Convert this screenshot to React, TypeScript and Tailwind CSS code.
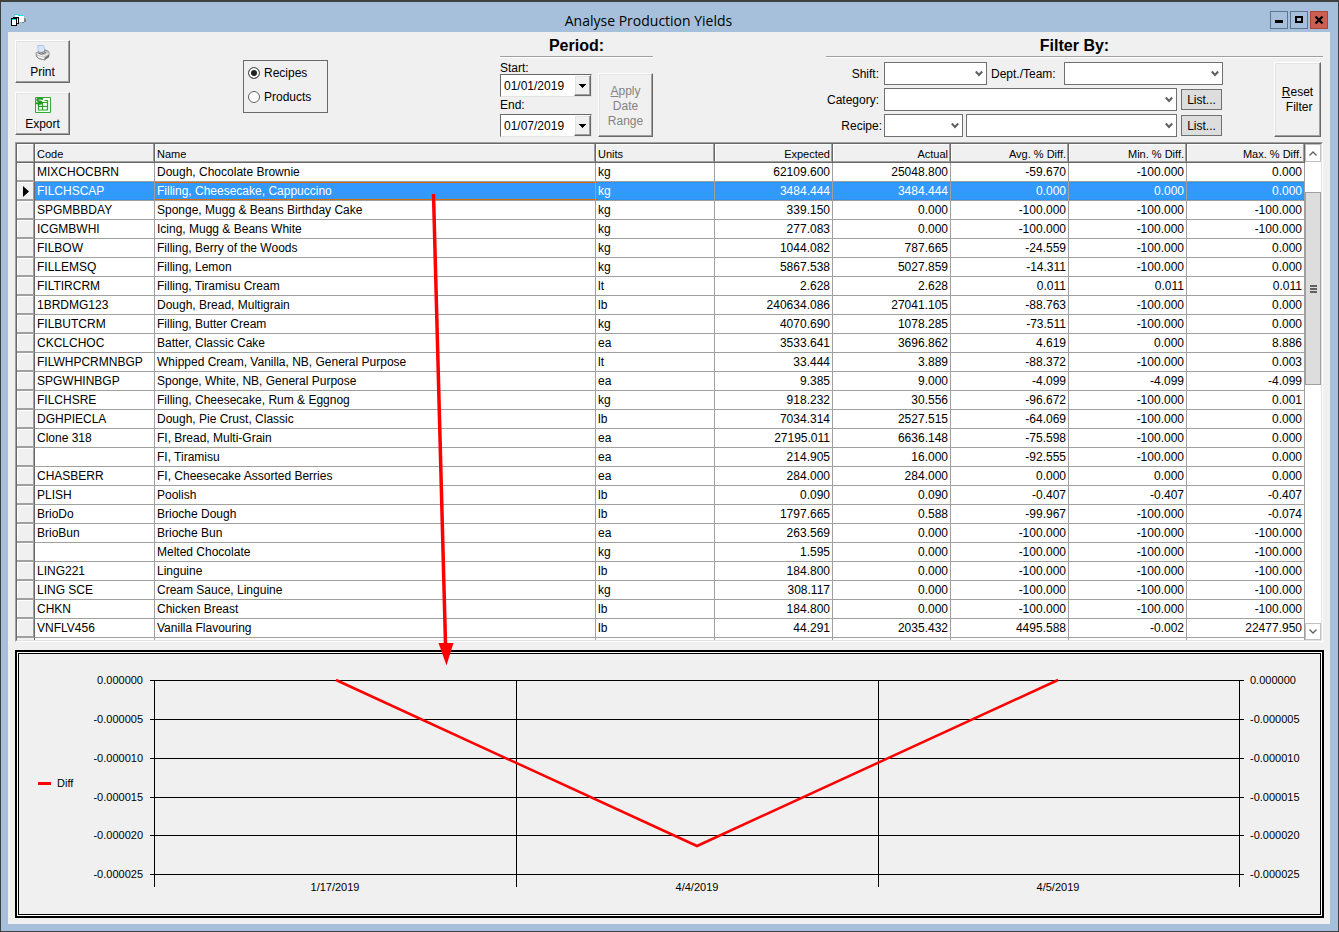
import React from "react";

type Row = [string, string, string, string, string, string, string, string];

const rows: Row[] = [
  ["MIXCHOCBRN", "Dough, Chocolate Brownie", "kg", "62109.600", "25048.800", "-59.670", "-100.000", "0.000"],
  ["FILCHSCAP", "Filling, Cheesecake, Cappuccino", "kg", "3484.444", "3484.444", "0.000", "0.000", "0.000"],
  ["SPGMBBDAY", "Sponge, Mugg & Beans Birthday Cake", "kg", "339.150", "0.000", "-100.000", "-100.000", "-100.000"],
  ["ICGMBWHI", "Icing, Mugg & Beans White", "kg", "277.083", "0.000", "-100.000", "-100.000", "-100.000"],
  ["FILBOW", "Filling, Berry of the Woods", "kg", "1044.082", "787.665", "-24.559", "-100.000", "0.000"],
  ["FILLEMSQ", "Filling, Lemon", "kg", "5867.538", "5027.859", "-14.311", "-100.000", "0.000"],
  ["FILTIRCRM", "Filling, Tiramisu Cream", "lt", "2.628", "2.628", "0.011", "0.011", "0.011"],
  ["1BRDMG123", "Dough, Bread, Multigrain", "lb", "240634.086", "27041.105", "-88.763", "-100.000", "0.000"],
  ["FILBUTCRM", "Filling, Butter Cream", "kg", "4070.690", "1078.285", "-73.511", "-100.000", "0.000"],
  ["CKCLCHOC", "Batter, Classic Cake", "ea", "3533.641", "3696.862", "4.619", "0.000", "8.886"],
  ["FILWHPCRMNBGP", "Whipped Cream, Vanilla, NB, General Purpose", "lt", "33.444", "3.889", "-88.372", "-100.000", "0.003"],
  ["SPGWHINBGP", "Sponge, White, NB, General Purpose", "ea", "9.385", "9.000", "-4.099", "-4.099", "-4.099"],
  ["FILCHSRE", "Filling, Cheesecake, Rum & Eggnog", "kg", "918.232", "30.556", "-96.672", "-100.000", "0.001"],
  ["DGHPIECLA", "Dough, Pie Crust, Classic", "lb", "7034.314", "2527.515", "-64.069", "-100.000", "0.000"],
  ["Clone 318", "FI, Bread, Multi-Grain", "ea", "27195.011", "6636.148", "-75.598", "-100.000", "0.000"],
  ["", "FI, Tiramisu", "ea", "214.905", "16.000", "-92.555", "-100.000", "0.000"],
  ["CHASBERR", "FI, Cheesecake Assorted Berries", "ea", "284.000", "284.000", "0.000", "0.000", "0.000"],
  ["PLISH", "Poolish", "lb", "0.090", "0.090", "-0.407", "-0.407", "-0.407"],
  ["BrioDo", "Brioche Dough", "lb", "1797.665", "0.588", "-99.967", "-100.000", "-0.074"],
  ["BrioBun", "Brioche Bun", "ea", "263.569", "0.000", "-100.000", "-100.000", "-100.000"],
  ["", "Melted Chocolate", "kg", "1.595", "0.000", "-100.000", "-100.000", "-100.000"],
  ["LING221", "Linguine", "lb", "184.800", "0.000", "-100.000", "-100.000", "-100.000"],
  ["LING SCE", "Cream Sauce, Linguine", "kg", "308.117", "0.000", "-100.000", "-100.000", "-100.000"],
  ["CHKN", "Chicken Breast", "lb", "184.800", "0.000", "-100.000", "-100.000", "-100.000"],
  ["VNFLV456", "Vanilla Flavouring", "lb", "44.291", "2035.432", "4495.588", "-0.002", "22477.950"],
];

const headers = ["Code", "Name", "Units", "Expected", "Actual", "Avg. % Diff.", "Min. % Diff.", "Max. % Diff."];
const SELECTED = 1;

const raised =
  "border border-t-white border-l-white border-r-[#696969] border-b-[#696969] bg-[#f0f0f0] shadow-[inset_-1px_-1px_0_#a0a0a0,inset_1px_1px_0_#e3e3e3]";

function AppIcon() {
  return (
    <svg width="16" height="14" viewBox="0 0 16 14" shapeRendering="crispEdges" aria-hidden="true">
      <path d="M4 2h8v1h1v6H8V4H4z" fill="#fff" />
      <path d="M3 1h4v1H3zM7 2h5v1H7z" fill="#00e5e5" />
      <path d="M13 5h1v1h1v3h-2zM11 9h2v1h-2z" fill="#808080" />
      <path d="M2 4h6v7H2z" fill="#000" />
      <path d="M3 6h4v4H3z" fill="#fff" />
      <path d="M3 5h4v1H3z" fill="#00e5e5" />
      <path d="M0 5h6v8H0z" fill="#000" />
      <path d="M1 7h4v5H1z" fill="#fff" />
      <path d="M1 6h4v1H1z" fill="#00e5e5" />
    </svg>
  );
}

function PrinterIcon() {
  return (
    <svg width="16" height="16" viewBox="0 0 16 16" aria-hidden="true">
      <path d="M2.500 .5h6l2 6-5 2.500-1.500-1z" fill="#d6e6ff" stroke="#9db4dc" strokeWidth=".7" />
      <path d="M1 8.500c0-1 1.500-1.500 3-1.700l1 1 5-1.300-.5-1.500c2 0 4.500 1 4.500 2.500v4L9.500 15 4 13.800 1.500 11.500z" fill="#c4c4c4" stroke="#7c7c7c" strokeWidth=".8" />
      <path d="M2 9l6 2 5.500-2.500" fill="none" stroke="#f4f4f4" />
      <path d="M3.500 8.200l3 1 4.500-1.700" fill="none" stroke="#666" strokeWidth=".9" />
      <path d="M3 11.500l5.500 1.800 4-2" fill="none" stroke="#fff" strokeWidth="1.200" />
      <path d="M9.500 12.500v2.500l4.500-3V9.800z" fill="#707070" />
    </svg>
  );
}

function SheetIcon() {
  return (
    <svg width="16" height="16" viewBox="0 0 16 16" aria-hidden="true">
      <path d="M.5 .5h15v15H.5z" fill="#f3fbf1" stroke="#3aa835" />
      <path d="M3.500 5.500h9v7.500h-9zM3.500 9.500h9M7.500 5.500V13M9.500 3.500h3v2" fill="none" stroke="#2fa52a" strokeWidth="1.200" />
      <path d="M8 2C5 .8 2 1.500 2.300 3.200S7 4 6.500 5.700 3 7 1 5.800" fill="none" stroke="#1f9a1a" strokeWidth="2" />
    </svg>
  );
}

function Combo({ id, className, label }: { id: string; className: string; label?: string }) {
  return (
    <div className={`relative h-[23px] ${className}`}>
      <select id={id} aria-label={label} className="h-full w-full appearance-none border border-[#707070] bg-white px-1">
        <option value=""></option>
      </select>
      <svg className="pointer-events-none absolute top-2 right-1" width="8" height="7" viewBox="0 0 8 7" aria-hidden="true">
        <path d="M.8 1.500l3.200 3.500L7.200 1.500" fill="none" stroke="#606060" strokeWidth="2" />
      </svg>
    </div>
  );
}

function DateBox({ id, value }: { id: string; value: string }) {
  return (
    <div className="flex h-[23px] w-[92px] border border-t-[#696969] border-r-[#e3e3e3] border-b-[#e3e3e3] border-l-[#696969] bg-white">
      <input id={id} defaultValue={value} className="w-0 flex-1 bg-white pl-[3px] outline-none" />
      <button type="button" aria-label="Open calendar" className={`flex w-[17px] items-center justify-center ${raised}`}>
        <svg width="7" height="4" viewBox="0 0 7 4" shapeRendering="crispEdges" aria-hidden="true">
          <path d="M0 0h7L3.500 4z" fill="#000" />
        </svg>
      </button>
    </div>
  );
}

function ListButton() {
  return (
    <button type="button" className="ml-1 h-[21px] w-[41px] border border-[#707070] bg-[#dddddd]">
      List...
    </button>
  );
}

function Heading({ children }: { children: React.ReactNode }) {
  return (
    <h2 className="h-[21px] border-b border-[#a0a0a0] text-center text-base leading-5 font-bold shadow-[0_1px_0_#fff]">
      {children}
    </h2>
  );
}

function Toolbar() {
  return (
    <div className="flex h-[110px] items-start pr-[7px] pl-[7px]">
      <div className="flex flex-col gap-[9px] pt-2">
        <button type="button" className={`flex h-[43px] w-[55px] flex-col items-center justify-end gap-1 pb-[3px] leading-[14px] ${raised}`}>
          <PrinterIcon />
          Print
        </button>
        <button type="button" className={`flex h-[43px] w-[55px] flex-col items-center justify-end gap-1 pb-[3px] leading-[14px] ${raised}`}>
          <SheetIcon />
          Export
        </button>
      </div>

      <fieldset className="mt-7 ml-[173px] flex h-[53px] w-[85px] flex-col gap-[8px] border border-[#696969] pt-[4px] pl-1">
        {["Recipes", "Products"].map((name, i) => (
          <label key={name} className="flex h-4 items-center gap-1 leading-[18px]">
            <input
              type="radio"
              name="kind"
              defaultChecked={i === 0}
              className="h-3 w-3 appearance-none rounded-full border border-[#606060] bg-white checked:bg-[#222] checked:shadow-[inset_0_0_0_2px_#fff]"
            />
            {name}
          </label>
        ))}
      </fieldset>

      <section className="mt-1 ml-[172px] w-[153px]">
        <Heading>Period:</Heading>
        <div className="flex items-end justify-between pt-[3px]">
          <div className="flex flex-col">
            <label htmlFor="start" className="h-[14px] leading-4">Start:</label>
            <DateBox id="start" value="01/01/2019" />
            <label htmlFor="end" className="h-[17px] leading-[17px]">End:</label>
            <DateBox id="end" value="01/07/2019" />
          </div>
          <button type="button" disabled className={`h-[64px] w-[55px] pt-[2px] leading-[15px] text-[#838383] ${raised}`}>
            <u>A</u>pply
            <br />
            Date
            <br />
            Range
          </button>
        </div>
      </section>

      <section className="mt-1 ml-auto w-[497px]">
        <Heading>Filter By:</Heading>
        <div className="flex justify-between pt-[5px] pr-[2px]">
          <div className="flex flex-col gap-[3px]">
            <div className="flex items-center">
              <label htmlFor="shift" className="w-[58px] pr-[5px] text-right">Shift:</label>
              <Combo id="shift" className="w-[103px]" />
              <label htmlFor="team" className="w-[77px] pl-1">Dept./Team:</label>
              <Combo id="team" className="w-[159px]" />
            </div>
            <div className="flex items-center">
              <label htmlFor="category" className="w-[58px] pr-[5px] text-right">Category:</label>
              <Combo id="category" className="w-[293px]" />
              <ListButton />
            </div>
            <div className="flex items-center">
              <label htmlFor="recipe" className="w-[58px] pr-[2px] text-right">Recipe:</label>
              <Combo id="recipe" className="w-[79px]" />
              <Combo id="recipe-name" label="Recipe name" className="ml-[3px] w-[211px]" />
              <ListButton />
            </div>
          </div>
          <button type="button" className={`h-[75px] w-[47px] leading-[15px] ${raised}`}>
            <u>R</u>eset
            <br />
            &nbsp;Filter
          </button>
        </div>
      </section>
    </div>
  );
}

function ScrollBar() {
  return (
    <div className="flex w-4 flex-col bg-white text-[#606060]">
      <button type="button" aria-label="Scroll up" className="flex h-[18px] items-center justify-center border border-[#c0c0c0] bg-white">
        <svg width="8" height="5" viewBox="0 0 8 5" aria-hidden="true">
          <path d="M.5 4.500L4 1l3.500 3.500" fill="none" stroke="currentColor" strokeWidth="1.300" />
        </svg>
      </button>
      <div className="h-[30px]" />
      <div className="flex h-[193px] flex-col items-center justify-center gap-px border border-[#a0a0a0] bg-[#dddddd]">
        <span className="h-[2px] w-[7px] bg-[#606060]" />
        <span className="h-[2px] w-[7px] bg-[#606060]" />
        <span className="h-[2px] w-[7px] bg-[#606060]" />
      </div>
      <div className="flex-1" />
      <button type="button" aria-label="Scroll down" className="flex h-[17px] items-center justify-center border border-[#c0c0c0] bg-white">
        <svg width="8" height="5" viewBox="0 0 8 5" aria-hidden="true">
          <path d="M.5 .5L4 4 7.500 .5" fill="none" stroke="currentColor" strokeWidth="1.300" />
        </svg>
      </button>
    </div>
  );
}

const headCell =
  "h-[19px] overflow-hidden border-r border-b border-[#696969] p-0 px-[2px] pt-px align-middle text-[11px] leading-[14px] font-normal whitespace-nowrap shadow-[inset_-1px_-1px_0_#a0a0a0,inset_1px_1px_0_#fff]";
const rowMarker =
  "border-r border-b border-r-[#696969] border-b-[#a0a0a0] bg-[#f0f0f0] p-0 shadow-[inset_-1px_-1px_0_#a0a0a0,inset_1px_1px_0_#fff]";

function Grid() {
  return (
    <div className="mx-[7px] flex border border-t-[#a0a0a0] border-r-white border-b-white border-l-[#a0a0a0]">
      <div className="flex min-w-0 flex-1 border border-t-[#696969] border-r-[#e3e3e3] border-b-[#e3e3e3] border-l-[#696969]">
        <table className="w-0 flex-1 table-fixed border-separate border-spacing-0 bg-white">
          <colgroup>
            <col className="w-[18px]" />
            <col className="w-[120px]" />
            <col />
            <col className="w-[119px]" />
            <col className="w-[118px]" />
            <col className="w-[118px]" />
            <col className="w-[118px]" />
            <col className="w-[118px]" />
            <col className="w-[118px]" />
          </colgroup>
          <thead className="bg-[#f0f0f0]">
            <tr>
              <th className={headCell} aria-label="Row" />
              {headers.map((h, i) => (
                <th key={h} scope="col" className={`${headCell} ${i > 2 ? "text-right" : "text-left"}`}>
                  {h}
                </th>
              ))}
            </tr>
          </thead>
          <tbody>
            {rows.map((row, r) => (
              <tr key={r} className={r === SELECTED ? "bg-[#3399ff] text-white" : ""}>
                <td className={rowMarker}>
                  {r === SELECTED && (
                    <svg className="mx-auto block" width="6" height="11" viewBox="0 0 6 11" aria-hidden="true">
                      <path d="M0 0l6 5.500L0 11z" fill="#000" />
                    </svg>
                  )}
                </td>
                {row.map((cell, c) => (
                  <td key={c} className="border-r border-b border-[#a0a0a0] p-0">
                    <div
                      className={`h-[18px] overflow-hidden border-y border-dotted px-[2px] leading-4 whitespace-nowrap ${
                        r === SELECTED ? "border-[#cc6600]" : "border-transparent"
                      } ${c > 2 ? "text-right" : "text-left"}`}
                    >
                      {cell}
                    </div>
                  </td>
                ))}
              </tr>
            ))}
            <tr aria-hidden="true">
              <td className="h-[2px] border-r border-[#696969] bg-[#f0f0f0] p-0" />
              {headers.map((h) => (
                <td key={h} className="h-[2px] border-r border-[#a0a0a0] p-0" />
              ))}
            </tr>
          </tbody>
        </table>
        <ScrollBar />
      </div>
    </div>
  );
}

const ticks: [number, string][] = [
  [26, "0.000000"],
  [65, "-0.000005"],
  [104, "-0.000010"],
  [143, "-0.000015"],
  [181, "-0.000020"],
  [220, "-0.000025"],
];

const days: [number, string][] = [
  [316, "1/17/2019"],
  [678, "4/4/2019"],
  [1039, "4/5/2019"],
];

function Chart() {
  return (
    <div className="mt-2 mr-[6px] ml-[7px] border-2 border-black bg-white p-px">
      <div className="border border-black bg-[#f0f0f0]">
        <svg className="block h-auto w-full" viewBox="0 0 1301 260" role="img" aria-label="Difference by date" fontSize="11">
          <g stroke="#000" shapeRendering="crispEdges">
            {ticks.map(([y]) => (
              <path key={y} d={`M131 ${y + 0.5}H1225`} />
            ))}
            {[135, 497, 859, 1220].map((x) => (
              <path key={x} d={`M${x + 0.5} 26V233`} />
            ))}
          </g>
          <path d="M317 26L678 192 1039 26" fill="none" stroke="#f00" strokeWidth="2.500" />
          <path d="M19 129.500h13" stroke="#f00" strokeWidth="3" />
          <text x="38" y="133">Diff</text>
          {ticks.map(([y, label]) => (
            <g key={label}>
              <text x="124" y={y + 4} textAnchor="end">{label}</text>
              <text x="1231" y={y + 4}>{label}</text>
            </g>
          ))}
          {days.map(([x, label]) => (
            <text key={label} x={x} y="237" textAnchor="middle">{label}</text>
          ))}
        </svg>
      </div>
    </div>
  );
}

export default function App() {
  return (
    <div className="flex min-h-screen flex-col border border-t-2 border-[#404040] bg-[#a6c0dc] pr-2 pb-[7px] pl-[7px] font-['Liberation_Sans',Arial,sans-serif] text-xs text-black">
      <header className="flex h-[30px] items-center pr-[2px] pl-[3px]">
        <div className="w-4 pt-[6px]">
          <AppIcon />
        </div>
        <h1 className="flex-1 pt-2 text-center font-['Open_Sans','Noto_Sans',sans-serif] text-sm">Analyse Production Yields</h1>
        <div className="flex gap-[2px] pt-[6px]">
          <button type="button" aria-label="Minimise" className="flex h-[18px] w-[18px] items-center justify-center border border-[#5b7593]">
            <svg width="10" height="10" viewBox="0 0 10 10" aria-hidden="true">
              <path d="M1 5h8v3H1z" />
            </svg>
          </button>
          <button type="button" aria-label="Maximise" className="flex h-[18px] w-[18px] items-center justify-center border border-[#5b7593]">
            <svg width="10" height="10" viewBox="0 0 10 10" shapeRendering="crispEdges" aria-hidden="true">
              <path d="M1 1h8v7H1zM3 3v3h4V3z" fillRule="evenodd" />
            </svg>
          </button>
          <button type="button" aria-label="Close" className="flex h-[18px] w-[18px] items-center justify-center border border-[#a8453a] bg-[#cc5f4f]">
            <svg width="10" height="10" viewBox="0 0 10 10" aria-hidden="true">
              <path d="M1.500 1.500l7 7M8.500 1.500l-7 7" stroke="#000" strokeWidth="2.200" />
            </svg>
          </button>
        </div>
      </header>
      <main className="relative flex-1 bg-[#f0f0f0]">
        <Toolbar />
        <Grid />
        <Chart />
        <svg className="pointer-events-none absolute top-[162px] left-[422px]" width="26" height="472" viewBox="0 0 26 472" aria-hidden="true">
          <path d="M3.500 0L15.500 450" stroke="#f00" strokeWidth="3.500" />
          <path d="M8.500 449h15l-7 22.500z" fill="#f00" />
        </svg>
      </main>
    </div>
  );
}
